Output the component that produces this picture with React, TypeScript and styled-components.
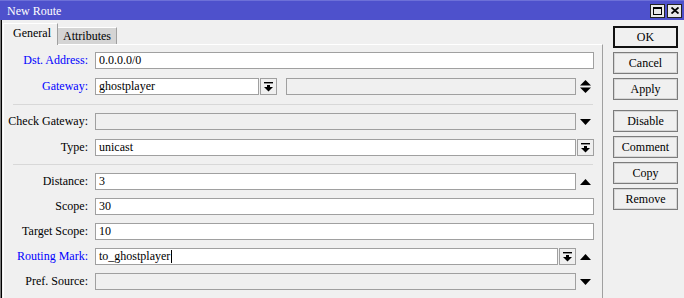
import styled, { createGlobalStyle } from "styled-components";

const GlobalStyle = createGlobalStyle`
  html, body {
    margin: 0;
    padding: 0;
    background: #f0f0f0;
  }
  body {
    font-family: "Liberation Serif", "Times New Roman", serif;
    font-size: 12px;
    color: #000;
  }
`;

const Window = styled.div`
  width: 684px;
  height: 298px;
  display: flex;
  flex-direction: column;
  background: #f0f0f0;
  box-shadow: inset 1px 0 #7a7a7a, inset 2px 0 #000;
  overflow: hidden;
`;

const TitleBar = styled.div`
  height: 20px;
  flex: none;
  background: #4e51cc;
  border-top: 1px solid #6d70d8;
  box-sizing: border-box;
  display: flex;
  align-items: center;
  justify-content: space-between;
  padding: 0 2px 0 7px;
`;

const Title = styled.span`
  color: #fff;
  font-size: 12px;
  line-height: 18px;
`;

const TitleButtons = styled.div`
  display: flex;
  gap: 2px;
`;

const TitleButton = styled.div`
  width: 15px;
  height: 14px;
  box-sizing: border-box;
  background: #e8e8e8;
  border: 1px solid #222;
  display: flex;
  align-items: center;
  justify-content: center;
`;

const Main = styled.div`
  flex: 1;
  display: flex;
  padding-left: 2px;
`;

const LeftColumn = styled.div`
  width: 601px;
  display: flex;
  flex-direction: column;
`;

const TabStrip = styled.div`
  height: 24px;
  flex: none;
  display: flex;
  align-items: flex-end;
  padding-left: 1px;
`;

const Tab = styled.div<{ $active?: boolean }>`
  box-sizing: border-box;
  height: ${(p) => (p.$active ? "22px" : "17px")};
  margin-bottom: ${(p) => (p.$active ? "-1px" : "0")};
  padding: ${(p) => (p.$active ? "2px 6px 0 9px" : "1px 5px 0 5px")};
  background: ${(p) => (p.$active ? "#f0f0f0" : "#d4d4d4")};
  border-top: 1px solid #fff;
  border-left: ${(p) => (p.$active ? "1px solid #fff" : "none")};
  border-right: 1px solid #a0a0a0;
  position: relative;
  z-index: ${(p) => (p.$active ? 1 : 0)};
  font-size: 12px;
  line-height: 14px;
`;

const Panel = styled.div`
  flex: 1;
  margin-left: 1px;
  border-top: 1px solid #fff;
  border-left: 1px solid #fff;
  border-right: 1px solid #a0a0a0;
  padding-right: 8px;
`;

const Section = styled.div<{ $gap: number; $top: number; $bottom: number }>`
  display: flex;
  flex-direction: column;
  gap: ${(p) => p.$gap}px;
  padding: ${(p) => p.$top}px 0 ${(p) => p.$bottom}px;
`;

const Separator = styled.div`
  height: 1px;
  background: #d8d8d8;
  margin: 0 1px 0 9px;
`;

const Row = styled.div`
  display: flex;
  align-items: center;
  height: 17px;
`;

const Label = styled.div<{ $link?: boolean }>`
  width: 84px;
  flex: none;
  margin-right: 7px;
  text-align: right;
  white-space: nowrap;
  color: ${(p) => (p.$link ? "#0000ff" : "#000")};
`;

const Field = styled.div<{ $disabled?: boolean; $width?: number; $gapLeft?: number }>`
  box-sizing: border-box;
  height: 17px;
  flex: ${(p) => (p.$width ? `0 0 ${p.$width}px` : "1 1 0")};
  min-width: 0;
  margin-left: ${(p) => p.$gapLeft ?? 0}px;
  border: 1px solid #a0a0a0;
  background: ${(p) => (p.$disabled ? "#f0f0f0" : "#fff")};
  padding: 0 3px;
  line-height: 15px;
  white-space: nowrap;
  display: flex;
  align-items: center;
`;

const Caret = styled.span`
  display: inline-block;
  width: 1px;
  height: 13px;
  background: #000;
  margin-left: 1px;
`;

const DropButton = styled.div`
  box-sizing: border-box;
  width: 17px;
  height: 17px;
  flex: none;
  margin-left: 1px;
  border: 1px solid #a0a0a0;
  background: #f0f0f0;
  display: flex;
  align-items: center;
  justify-content: center;
`;

const Trail = styled.div`
  width: 18px;
  flex: none;
  display: flex;
  align-items: center;
  justify-content: center;
`;

const RightColumn = styled.div`
  flex: 1;
  padding: 6px 0 0 10px;
  display: flex;
  flex-direction: column;
`;

const ButtonGroup = styled.div<{ $top: number }>`
  display: flex;
  flex-direction: column;
  gap: 4px;
  margin-top: ${(p) => p.$top}px;
`;

const ActionButton = styled.div<{ $default?: boolean }>`
  box-sizing: border-box;
  width: 65px;
  height: 22px;
  background: #f0f0f0;
  border: ${(p) => (p.$default ? "2px solid #111" : "1px solid #7c7c7c")};
  box-shadow: ${(p) => (p.$default ? "none" : "inset 0 0 0 1px #d6d6d6")};
  display: flex;
  align-items: center;
  justify-content: center;
  font-size: 12px;
`;

const DropIcon = () => (
  <svg width="9" height="10" viewBox="0 0 9 10">
    <rect x="0" y="0" width="9" height="1.4" fill="#000" />
    <rect x="3" y="3" width="3" height="3" fill="#000" />
    <polygon points="0,5 9,5 4.5,9.6" fill="#000" />
  </svg>
);

const DownArrow = () => (
  <svg width="11" height="6" viewBox="0 0 11 6">
    <polygon points="0,0 11,0 5.5,6" fill="#000" />
  </svg>
);

const UpArrow = () => (
  <svg width="11" height="6" viewBox="0 0 11 6">
    <polygon points="0,6 11,6 5.5,0" fill="#000" />
  </svg>
);

const UpDownArrow = () => (
  <svg width="11" height="13" viewBox="0 0 11 13">
    <polygon points="0,5.5 11,5.5 5.5,0" fill="#000" />
    <polygon points="0,7.5 11,7.5 5.5,13" fill="#000" />
  </svg>
);

const MaximizeIcon = () => (
  <svg width="9" height="8" viewBox="0 0 9 8">
    <rect x="0.5" y="0.5" width="8" height="7" fill="none" stroke="#000" />
    <rect x="0" y="0" width="9" height="2" fill="#000" />
  </svg>
);

const CloseIcon = () => (
  <svg width="8" height="7" viewBox="0 0 8 7">
    <path d="M0.5 0.5 L7.5 6.5 M7.5 0.5 L0.5 6.5" stroke="#000" strokeWidth="1.8" />
  </svg>
);

export default function App() {
  return (
    <>
      <GlobalStyle />
      <Window>
        <TitleBar>
          <Title>New Route</Title>
          <TitleButtons>
            <TitleButton>
              <MaximizeIcon />
            </TitleButton>
            <TitleButton>
              <CloseIcon />
            </TitleButton>
          </TitleButtons>
        </TitleBar>
        <Main>
          <LeftColumn>
            <TabStrip>
              <Tab $active>General</Tab>
              <Tab>Attributes</Tab>
            </TabStrip>
            <Panel>
              <Section $gap={9} $top={7} $bottom={9}>
                <Row>
                  <Label $link>Dst. Address:</Label>
                  <Field>0.0.0.0/0</Field>
                </Row>
                <Row>
                  <Label $link>Gateway:</Label>
                  <Field $width={164}>ghostplayer</Field>
                  <DropButton>
                    <DropIcon />
                  </DropButton>
                  <Field $disabled $gapLeft={9} />
                  <Trail>
                    <UpDownArrow />
                  </Trail>
                </Row>
              </Section>
              <Separator />
              <Section $gap={9} $top={8} $bottom={8}>
                <Row>
                  <Label>Check Gateway:</Label>
                  <Field $disabled />
                  <Trail>
                    <DownArrow />
                  </Trail>
                </Row>
                <Row>
                  <Label>Type:</Label>
                  <Field>unicast</Field>
                  <DropButton>
                    <DropIcon />
                  </DropButton>
                </Row>
              </Section>
              <Separator />
              <Section $gap={8} $top={8} $bottom={0}>
                <Row>
                  <Label>Distance:</Label>
                  <Field>3</Field>
                  <Trail>
                    <UpArrow />
                  </Trail>
                </Row>
                <Row>
                  <Label>Scope:</Label>
                  <Field>30</Field>
                </Row>
                <Row>
                  <Label>Target Scope:</Label>
                  <Field>10</Field>
                </Row>
                <Row>
                  <Label $link>Routing Mark:</Label>
                  <Field>
                    to_ghostplayer
                    <Caret />
                  </Field>
                  <DropButton>
                    <DropIcon />
                  </DropButton>
                  <Trail>
                    <UpArrow />
                  </Trail>
                </Row>
                <Row>
                  <Label>Pref. Source:</Label>
                  <Field $disabled />
                  <Trail>
                    <DownArrow />
                  </Trail>
                </Row>
              </Section>
            </Panel>
          </LeftColumn>
          <RightColumn>
            <ButtonGroup $top={0}>
              <ActionButton $default>OK</ActionButton>
              <ActionButton>Cancel</ActionButton>
              <ActionButton>Apply</ActionButton>
            </ButtonGroup>
            <ButtonGroup $top={10}>
              <ActionButton>Disable</ActionButton>
              <ActionButton>Comment</ActionButton>
              <ActionButton>Copy</ActionButton>
              <ActionButton>Remove</ActionButton>
            </ButtonGroup>
          </RightColumn>
        </Main>
      </Window>
    </>
  );
}
